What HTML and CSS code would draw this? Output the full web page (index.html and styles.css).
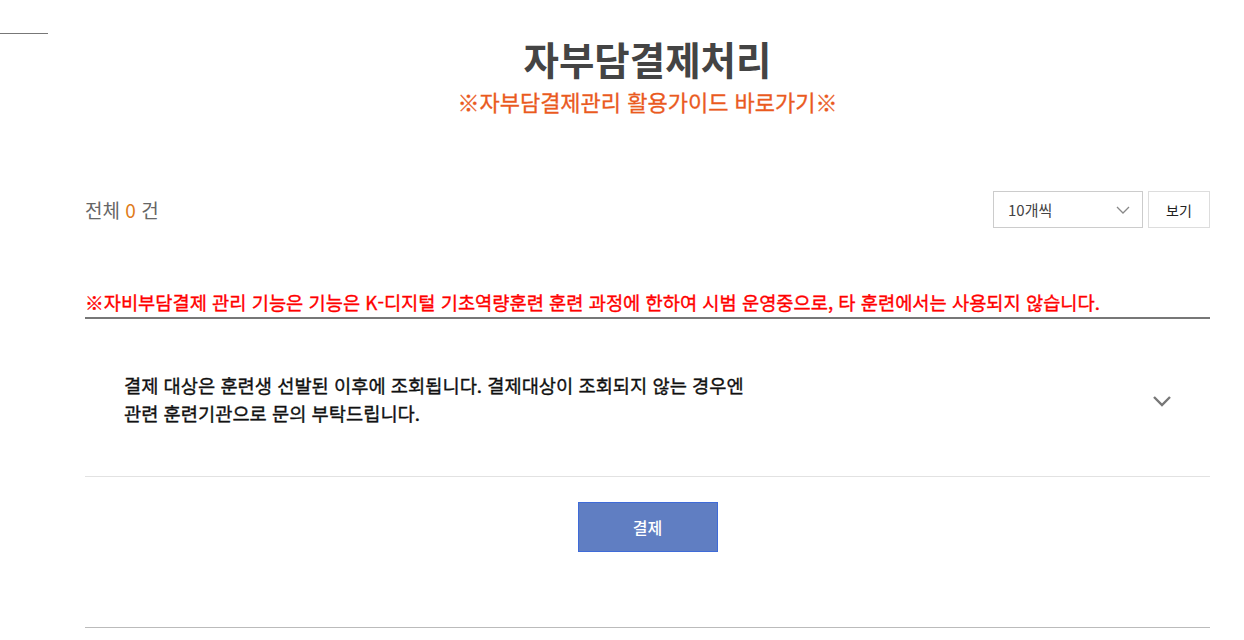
FILE: index.html
```html
<!DOCTYPE html>
<html lang="ko">
<head>
<meta charset="utf-8">
<title>자부담결제처리</title>
<link rel="stylesheet" href="styles.css">
</head>
<body>
<div class="top-line"></div>
<main class="content">
  <header class="page-head">
    <h1 class="page-title">자부담결제처리</h1>
    <a class="guide-link" href="#">※자부담결제관리 활용가이드 바로가기※</a>
  </header>

  <div class="list-bar">
    <p class="total">전체 <span class="count">0</span> 건</p>
    <div class="list-ctrl">
      <div class="select">
        <span>10개씩</span>
        <svg class="select-arrow" width="14" height="8" viewBox="0 0 14 8"><path d="M1 1l6 6 6-6" fill="none" stroke="#888" stroke-width="1.3"/></svg>
      </div>
      <button class="view-btn" type="button">보기</button>
    </div>
  </div>

  <p class="notice">※자비부담결제 관리 기능은 기능은 K-디지털 기초역량훈련 훈련 과정에 한하여 시범 운영중으로, 타 훈련에서는 사용되지 않습니다.</p>

  <div class="accordion">
    <p class="acc-text">결제 대상은 훈련생 선발된 이후에 조회됩니다. 결제대상이 조회되지 않는 경우엔<br>관련 훈련기관으로 문의 부탁드립니다.</p>
    <svg class="acc-arrow" width="20" height="12" viewBox="0 0 20 12"><path d="M2 2l8 8 8-8" fill="none" stroke="#777" stroke-width="2.4"/></svg>
  </div>

  <div class="pay-row">
    <button class="pay-btn" type="button">결제</button>
  </div>
</main>
</body>
</html>
```

FILE: styles.css
```css
html, body {
  margin: 0;
  padding: 0;
  background: #fff;
}
body {
  font-family: "Noto Sans CJK KR", "Noto Sans", sans-serif;
  color: #222;
}
.top-line {
  width: 48px;
  height: 1px;
  background: #777;
  margin-top: 33px;
}
.content {
  width: 1125px;
  margin-left: 85px;
}
.page-head {
  text-align: center;
}
.page-title {
  margin: 0;
  font-size: 38.5px;
  line-height: 48px;
  font-weight: 700;
  color: #444;
}
.guide-link {
  display: inline-block;
  margin-top: 4px;
  font-size: 22px;
  line-height: 30px;
  font-weight: 400;
  color: #ea5a1e;
  text-decoration: none;
  -webkit-text-stroke: 0.3px #ea5a1e;
}
.list-bar {
  display: flex;
  justify-content: space-between;
  align-items: center;
  margin-top: 75px;
}
.total {
  margin: 0;
  font-size: 19px;
  color: #666;
}
.count {
  color: #e07b1a;
}
.list-ctrl {
  display: flex;
  gap: 5px;
}
.select {
  box-sizing: border-box;
  width: 150px;
  height: 37px;
  border: 1px solid #ccc;
  display: flex;
  align-items: center;
  justify-content: space-between;
  padding: 0 12px 0 14px;
  font-size: 15px;
  color: #444;
}
.view-btn {
  box-sizing: border-box;
  width: 62px;
  height: 37px;
  border: 1px solid #ddd;
  background: #fff;
  font-family: inherit;
  font-size: 14px;
  color: #222;
  padding: 0;
}
.notice {
  margin: 61px 0 0;
  padding-bottom: 2px;
  border-bottom: 2px solid #777;
  font-size: 18.7px;
  line-height: 26px;
  font-weight: 400;
  color: #ff0000;
  -webkit-text-stroke: 0.35px #ff0000;
}
.accordion {
  display: flex;
  align-items: center;
  justify-content: space-between;
  padding: 52px 38px 49px 39px;
  border-bottom: 1px solid #e2e2e2;
}
.acc-text {
  margin: 0;
  font-size: 18.7px;
  line-height: 28px;
  font-weight: 400;
  color: #111;
  -webkit-text-stroke: 0.35px #111;
}
.acc-arrow {
  margin-top: 4px;
}
.pay-row {
  display: flex;
  justify-content: center;
  padding: 25px 0 75px;
  border-bottom: 1px solid #bbb;
}
.pay-btn {
  width: 140px;
  height: 50px;
  background: #607ec2;
  border: 1px solid #3f6bd8;
  color: #fff;
  font-family: inherit;
  font-size: 16px;
  font-weight: 500;
  padding: 0;
}
```
